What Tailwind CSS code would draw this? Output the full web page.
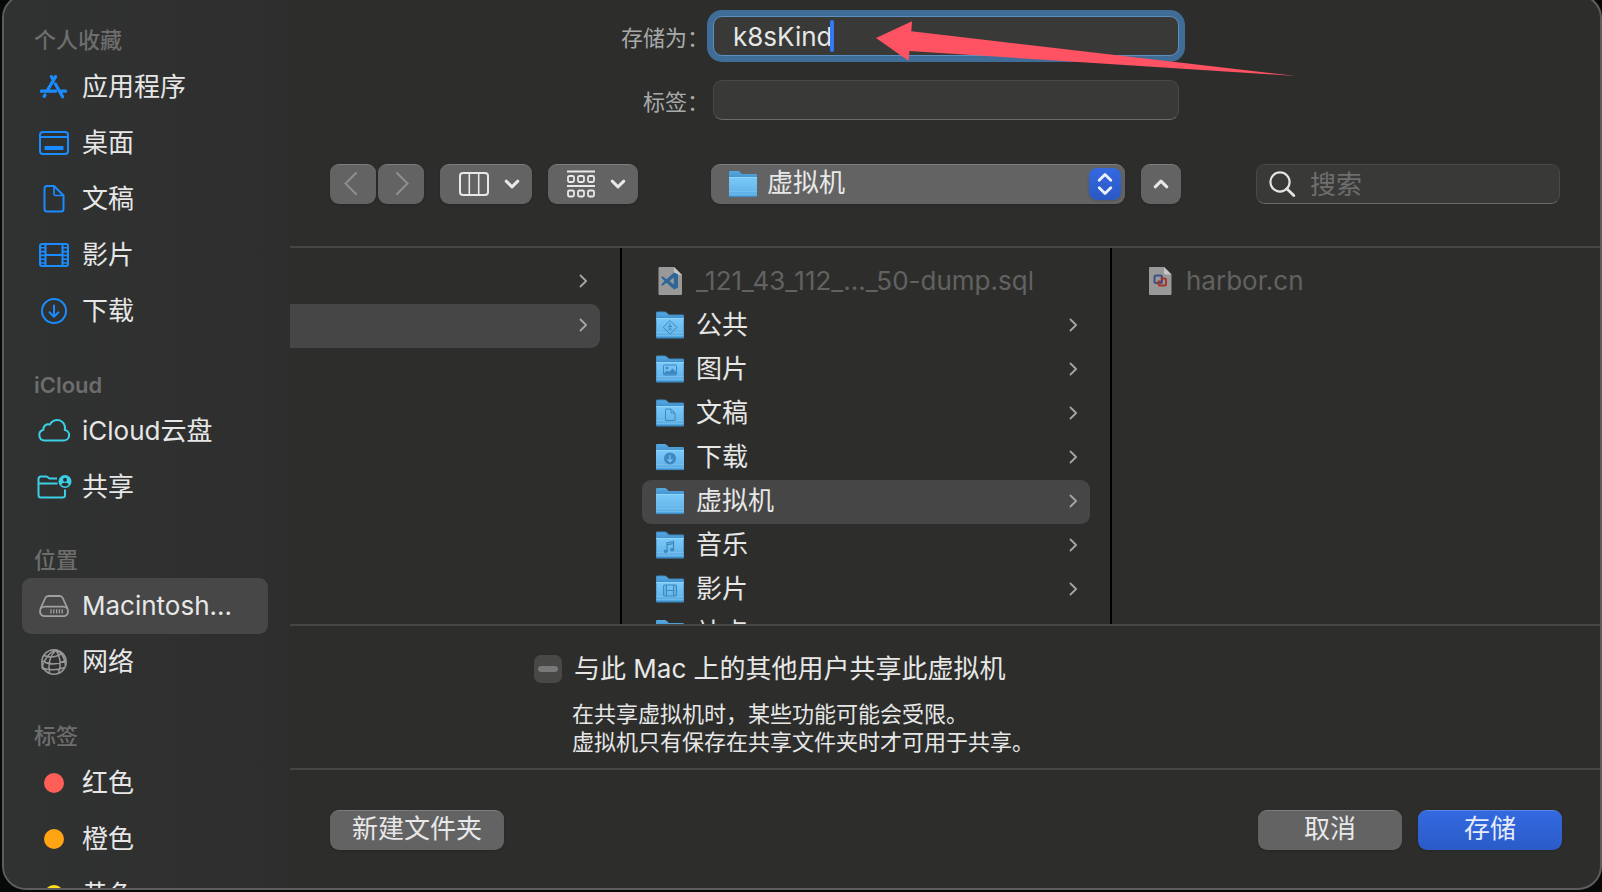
<!DOCTYPE html>
<html lang="zh-CN">
<head>
<meta charset="utf-8">
<meta name="viewport" content="width=device-width, initial-scale=1">
<title>存储</title>
<script src="https://cdn.jsdelivr.net/npm/@tailwindcss/browser@4"></script>
</head>
<body class="h-screen overflow-hidden bg-[#070808] pl-[2px] font-['Inter','Noto_Sans_CJK_SC',sans-serif] text-[26px] leading-9 text-[#e6e7e6]">

<!-- Shared symbols -->
<svg class="absolute h-0 w-0" aria-hidden="true">
  <defs>
    <linearGradient id="folderBack" x1="0" y1="0" x2="0" y2="1"><stop offset="0" stop-color="#56a9e0"/><stop offset="1" stop-color="#3a86c6"/></linearGradient>
    <linearGradient id="folderFront" x1="0" y1="0" x2="0" y2="1"><stop offset="0" stop-color="#7bcaf8"/><stop offset=".75" stop-color="#64b5ea"/><stop offset="1" stop-color="#4c9fd9"/></linearGradient>
    <symbol id="folder" viewBox="0 0 28 28">
      <path d="M0 2.2Q0 1 1.2 1H8.5Q9.8 1 10.8 2L12.2 3.4Q12.8 4 14 4H26.8Q28 4 28 5.2V12H0Z" fill="url(#folderBack)"/>
      <path d="M0 7H28V26Q28 27 27 27H1Q0 27 0 26Z" fill="url(#folderFront)"/>
      <path d="M0 7.5H28" stroke="#8ed5fb"/>
      <path d="M0 21.5H28M0 24.5H28" stroke="#86c9f3" stroke-width=".6" opacity=".8"/>
      <path d="M0 26.6H28" stroke="#3b87bf" stroke-width=".8"/>
    </symbol>
    <symbol id="chevron" viewBox="0 0 10 14"><path d="M2.500 1.500 8.100 7 2.500 12.500" fill="none" stroke="#a4a5a4" stroke-width="1.8" stroke-linecap="round" stroke-linejoin="round"/></symbol>
    <symbol id="down" viewBox="0 0 16 10"><path d="M2.2 2.2 8 7.8 13.8 2.2" fill="none" stroke="#e8e8e8" stroke-width="3" stroke-linecap="round" stroke-linejoin="round"/></symbol>
  </defs>
</svg>

<div class="-mt-1.5 flex h-[calc(100vh+4px)] overflow-hidden rounded-[24px] border-2 border-[#5c5d5c] bg-[#2d2e2c]">

  <!-- Sidebar -->
  <nav class="w-[286px] shrink-0 overflow-hidden bg-linear-to-r from-[#303231] to-[#2e2e2e] pl-[18px] pr-[22px]" aria-label="边栏">
    <h2 class="flex h-[63px] items-end pb-px pl-3 text-[22px] font-medium text-[#6c6d6c]">个人收藏</h2>
    <ul>
      <li><a href="#" class="flex h-14 items-center gap-[11px] rounded-[9px] px-[15px]">
        <svg class="h-8 w-[34px]" viewBox="0 0 34 32" fill="none" stroke="#1a8cff" stroke-width="3.2" stroke-linecap="round"><path d="M18.6 5.6 10.6 19M14.4 5.6 15.6 7.6M18.4 13 25.6 25.8M7.2 25.4 8 24M4.4 20.2H18.6M24.4 20.2H28.6"/></svg>
        <span>应用程序</span></a></li>
      <li><a href="#" class="flex h-14 items-center gap-[11px] rounded-[9px] px-[15px]">
        <svg class="h-8 w-[34px]" viewBox="0 0 34 32" fill="none" stroke="#1a8cff" stroke-width="2"><rect x="3" y="5" width="28" height="22" rx="3"/><path d="M3 10H31"/><rect x="7.5" y="19" width="19" height="4" rx=".8" fill="#1a8cff" stroke="none"/></svg>
        <span>桌面</span></a></li>
      <li><a href="#" class="flex h-14 items-center gap-[11px] rounded-[9px] px-[15px]">
        <svg class="h-8 w-[34px]" viewBox="0 0 34 32" fill="none" stroke="#1a8cff" stroke-width="2" stroke-linejoin="round"><path d="M10 3H17L26.5 12.5V26Q26.5 28.5 24 28.5H10Q7.500 28.500 7.500 26V5.500Q7.500 3 10 3Z"/><path d="M17 3V11Q17 12.500 18.500 12.500H26.500" stroke-width="1.700"/></svg>
        <span>文稿</span></a></li>
      <li><a href="#" class="flex h-14 items-center gap-[11px] rounded-[9px] px-[15px]">
        <svg class="h-8 w-[34px]" viewBox="0 0 34 32" fill="none" stroke="#1a8cff" stroke-width="2"><rect x="3" y="5" width="28" height="22" rx="2"/><path d="M8.500 5V27M25.500 5V27M8.500 16H25.500"/><path d="M3 8.800H8M3 12.600H8M3 16.400H8M3 20.200H8M3 24H8M26 8.800H31M26 12.600H31M26 16.400H31M26 20.200H31M26 24H31" stroke-width="1.600"/></svg>
        <span>影片</span></a></li>
      <li><a href="#" class="flex h-14 items-center gap-[11px] rounded-[9px] px-[15px]">
        <svg class="h-8 w-[34px]" viewBox="0 0 34 32" fill="none" stroke="#1a8cff" stroke-width="2" stroke-linecap="round" stroke-linejoin="round"><circle cx="17" cy="16" r="12"/><path d="M17 10.500V21.500M12.500 17.300 17 21.800 21.500 17.300"/></svg>
        <span>下载</span></a></li>
    </ul>
    <h2 class="flex h-16 items-end pl-3 text-[22px] font-semibold text-[#6c6d6c]">iCloud</h2>
    <ul>
      <li><a href="#" class="flex h-14 items-center gap-[11px] rounded-[9px] px-[15px]">
        <svg class="h-8 w-[34px]" viewBox="0 0 34 32" fill="none" stroke="#3bd0e6" stroke-width="2" stroke-linejoin="round"><path d="M7.500 25.500H26.500A5.300 5.300 0 0 0 27.800 15A8 8 0 0 0 12.800 9.600A4.800 4.800 0 0 0 6.400 14.700A5.500 5.500 0 0 0 7.500 25.500Z"/></svg>
        <span>iCloud云盘</span></a></li>
      <li><a href="#" class="flex h-14 items-center gap-[11px] rounded-[9px] px-[15px]">
        <svg class="h-8 w-[34px] overflow-visible" viewBox="0 0 34 32" fill="none" stroke="#3bd0e6" stroke-width="2" stroke-linejoin="round"><path d="M20 7.500H12.500L10.500 6Q9.800 5.400 8.800 5.400H4Q1.500 5.400 1.500 8V24Q1.500 26.500 4 26.500H25.500Q28 26.500 28 24V18.500M1.500 12.500H20.500"/><circle cx="28" cy="10.500" r="6.500" fill="#3bd0e6" stroke="none"/><circle cx="28" cy="8.700" r="2" fill="#2e2f2f" stroke="none"/><path d="M24.300 14Q24.800 11.700 28 11.700T31.700 14Q30 15.400 28 15.400T24.300 14Z" fill="#2e2f2f" stroke="none"/></svg>
        <span>共享</span></a></li>
    </ul>
    <h2 class="flex h-[63px] items-end pl-3 text-[22px] font-medium text-[#6c6d6c]">位置</h2>
    <ul>
      <li><a href="#" aria-current="page" class="flex h-14 items-center gap-[11px] rounded-[9px] bg-[#474747] px-[15px]">
        <svg class="h-8 w-[34px]" viewBox="0 0 34 32" fill="none" stroke="#a0a0a0" stroke-width="1.800" stroke-linejoin="round"><path d="M3.500 18.500 8.300 8Q9.200 6 11.400 6H22.600Q24.800 6 25.700 8L30.500 18.500"/><rect x="3" y="16.600" width="28" height="9.600" rx="4.600"/><path d="M14 19.200V23.600M16.800 19.200V23.600M19.600 19.200V23.600M22.400 19.200V23.600M25.200 19.200V23.600" stroke-width="1.300"/></svg>
        <span>Macintosh...</span></a></li>
      <li><a href="#" class="flex h-14 items-center gap-[11px] rounded-[9px] px-[15px]">
        <svg class="h-8 w-[34px]" viewBox="0 0 34 32" fill="none" stroke="#979897" stroke-width="1.500"><circle cx="17" cy="16" r="12.200"/><path d="M19 4Q10 12 12.500 27.500M19 4Q13.500 5 8 14T7.500 23.500M19 4Q26 15 21.500 27M19 4Q28 8 28.500 20M7 9.500Q16 13.500 25.500 7.200M4.800 15Q16 21 29 14.500M7 22.500Q17 25.500 27.500 21.500"/></svg>
        <span>网络</span></a></li>
    </ul>
    <h2 class="flex h-[65px] items-end pb-px pl-3 text-[22px] font-medium text-[#6c6d6c]">标签</h2>
    <ul>
      <li><a href="#" class="flex h-14 items-center gap-[11px] rounded-[9px] px-[15px]"><span class="flex w-[34px] justify-center"><i class="size-5 rounded-full bg-[#ff5f57]"></i></span><span>红色</span></a></li>
      <li><a href="#" class="flex h-14 items-center gap-[11px] rounded-[9px] px-[15px]"><span class="flex w-[34px] justify-center"><i class="size-5 rounded-full bg-[#ffa514]"></i></span><span>橙色</span></a></li>
      <li><a href="#" class="flex h-14 items-center gap-[11px] rounded-[9px] px-[15px]"><span class="flex w-[34px] justify-center"><i class="size-5 rounded-full bg-[#ffe019]"></i></span><span>黄色</span></a></li>
    </ul>
  </nav>

  <main class="flex min-w-0 flex-1 flex-col">

    <!-- Name and tag fields, toolbar -->
    <header class="border-b-2 border-[#454644] pt-5 pb-[42px]">
      <div class="grid grid-cols-[1fr_466px_1fr] items-center gap-x-1 gap-y-6 pl-[2px]">
        <label for="name" class="justify-self-end pt-[3px] text-[22px] text-[#a8a9a8]">存储为：</label>
        <div class="relative">
          <input id="name" type="text" value="k8sKind" class="block h-10 w-full rounded-[9px] border border-[#5d8fc0] bg-[#393a38] px-[19px] text-[#e6e7e6] caret-transparent ring-[6px] ring-[#3f6d97] outline-none">
          <span class="absolute top-1 left-[117px] h-8 w-1 rounded-sm bg-[#3478f6]"></span>
          <!-- Pointer arrow laid over the field -->
          <svg class="pointer-events-none absolute top-0 left-[163px] h-[66px] w-[424px] overflow-visible" viewBox="0 0 424 66" aria-hidden="true"><path d="M0 22 36 5.300 35.300 15.300 420 60 33.500 35 32.500 44.700Z" fill="#ff5263"/></svg>
        </div>
        <label for="tags" class="col-start-1 justify-self-end pt-[3px] text-[22px] text-[#a8a9a8]">标签：</label>
        <input id="tags" type="text" class="block h-10 w-full rounded-[9px] border border-[#484948] border-b-[#6a6b6a] bg-[#393a38] px-5 outline-none">
      </div>

      <div class="mt-11 flex items-center justify-between px-10">
        <div class="flex gap-4">
          <div class="flex gap-[2px]">
            <button type="button" disabled aria-label="后退" class="flex h-10 w-[46px] items-center justify-center rounded-[9px] border-t border-[#7c7d7c] bg-[#636363] pr-1 pb-1 shadow-sm"><svg class="h-6 w-4" viewBox="0 0 16 24" fill="none" stroke="#8d8e8d" stroke-width="2" stroke-linecap="round"><path d="M13 2 2.500 12.500 13 23" /></svg></button>
            <button type="button" disabled aria-label="前进" class="flex h-10 w-[46px] items-center justify-center rounded-[9px] border-t border-[#7c7d7c] bg-[#636363] pb-1 shadow-sm"><svg class="h-6 w-4" viewBox="0 0 16 24" fill="none" stroke="#8d8e8d" stroke-width="2" stroke-linecap="round"><path d="M4 2 14.500 12.500 4 23"/></svg></button>
          </div>
          <button type="button" aria-label="分栏显示" aria-haspopup="menu" class="flex h-10 w-[92px] items-center justify-between rounded-[9px] border-t border-[#7c7d7c] bg-[#636363] pr-3 pb-[2px] pl-[18px] shadow-sm">
            <svg class="h-6 w-8" viewBox="0 0 32 24" fill="none" stroke="#e8e8e8" stroke-width="2"><rect x="2" y="1" width="28" height="22" rx="3"/><path d="M11.300 1V23M20.700 1V23" stroke-width="1.600"/></svg>
            <svg class="h-[10px] w-4"><use href="#down"/></svg>
          </button>
          <button type="button" aria-label="分组方式" aria-haspopup="menu" class="flex h-10 w-[90px] items-center justify-between rounded-[9px] border-t border-[#7c7d7c] bg-[#636363] pr-3 pb-[2px] pl-[18px] shadow-sm">
            <svg class="h-7 w-[30px]" viewBox="0 0 30 28" fill="none" stroke="#e8e8e8" stroke-width="1.800"><path d="M1 1.500H29M1 16H29"/><rect x="2" y="6" width="6" height="6" rx="1.400"/><rect x="12" y="6" width="6" height="6" rx="1.400"/><rect x="22" y="6" width="6" height="6" rx="1.400"/><rect x="2" y="20.500" width="6" height="6" rx="1.400"/><rect x="12" y="20.500" width="6" height="6" rx="1.400"/><rect x="22" y="20.500" width="6" height="6" rx="1.400"/></svg>
            <svg class="h-[10px] w-4"><use href="#down"/></svg>
          </button>
        </div>

        <div class="flex gap-4 pr-[2px]">
          <div class="relative w-[414px]">
            <select aria-label="位置" class="block h-10 w-full appearance-none rounded-[9px] border-t border-[#7c7d7c] bg-[#636363] pr-10 pb-1 pl-14 text-[26px] leading-9 text-[#e8e8e8] shadow-sm outline-none"><option>虚拟机</option></select>
            <svg class="pointer-events-none absolute top-1.5 left-[18px] size-7"><use href="#folder"/></svg>
            <span class="pointer-events-none absolute top-1 right-1 flex size-8 items-center justify-center rounded-[8px] bg-linear-to-b from-[#3569e0] to-[#2a59c4] shadow"><svg class="h-6 w-4" viewBox="0 0 16 24" fill="none" stroke="#edf1fb" stroke-width="2.800" stroke-linecap="round" stroke-linejoin="round"><path d="M2.200 8.200 8 2.600 13.800 8.200M2.200 15.800 8 21.400 13.800 15.800"/></svg></span>
          </div>
          <button type="button" aria-label="折叠" class="flex size-10 items-center justify-center rounded-[9px] border-t border-[#7c7d7c] bg-[#636363] pb-[2px] shadow-sm"><svg class="h-[10px] w-4 rotate-180"><use href="#down"/></svg></button>
        </div>

        <div class="relative w-[304px]">
          <input type="search" aria-label="搜索" placeholder="搜索" class="block h-10 w-full rounded-[9px] border border-[#484948] border-b-[#6a6b6a] bg-[#393a38] pr-3 pl-[53px] text-[#e2e3e2] outline-none placeholder:text-[#6d6e6d]">
          <svg class="pointer-events-none absolute top-1.5 left-3 size-7" viewBox="0 0 28 28" fill="none" stroke="#e2e3e2" stroke-width="2.200" stroke-linecap="round"><circle cx="12" cy="12" r="9.600"/><path d="M18.800 18.800 25.800 25.600" stroke-width="2.800"/></svg>
        </div>
      </div>
    </header>

    <!-- Column browser -->
    <section class="flex min-h-0 flex-1 overflow-hidden" aria-label="文件">
      <ul class="w-[332px] shrink-0 border-r-2 border-black pt-3 pr-5">
        <li><button type="button" aria-label="文件夹" class="flex h-11 w-full items-center justify-end pr-3 pb-[2px]"><svg class="h-3.5 w-[10px]"><use href="#chevron"/></svg></button></li>
        <li><button type="button" aria-label="已选文件夹" class="flex h-11 w-full items-center justify-end rounded-r-[9px] bg-[#464646] pr-3 pb-[2px]"><svg class="h-3.5 w-[10px]"><use href="#chevron"/></svg></button></li>
      </ul>
      <ul class="w-[490px] shrink-0 border-r-2 border-black px-5 pt-3">
        <li><button type="button" disabled class="flex h-11 w-full items-center gap-3 px-3.5 pb-[2px] text-left text-[#616261]">
          <svg class="size-7 shrink-0" viewBox="0 0 28 28"><path d="M2.500 1Q2.500 0 3.500 0H18L26 8V27Q26 28 25 28H3.500Q2.500 28 2.500 27Z" fill="#989998"/><path d="M18 0 26 8H19.500Q18 8 18 6.500Z" fill="#c4c5c4"/><path d="M18 5.500 22 7.200V20.800L18 22.500 10.500 15.800 6.600 18.800 5 17.800 8.500 14 5 10.200 6.600 9.200 10.500 12.200ZM17.800 10.500 13.500 14 17.800 17.500Z" fill="#2f6698" fill-rule="evenodd"/></svg>
          <span>_121_43_112_..._50-dump.sql</span></button></li>
        <li><button type="button" class="flex h-11 w-full items-center gap-3 pr-3 pb-[2px] pl-3.5 text-left">
          <svg class="size-7 shrink-0" viewBox="0 0 28 28" fill="none" stroke="#3f87c0"><use href="#folder" width="28" height="28"/><path d="M14 9.500 20.800 16.300 14 23.100 7.200 16.300Z"/><circle cx="14" cy="12.800" r=".8" fill="#3f87c0" stroke="none"/><path d="M14 14V17L12.500 19.500M14 17 15.500 19.500M11.800 15.800 14 14.500 16 15.800"/></svg>
          <span class="flex-1">公共</span><svg class="h-3.5 w-[10px]"><use href="#chevron"/></svg></button></li>
        <li><button type="button" class="flex h-11 w-full items-center gap-3 pr-3 pb-[2px] pl-3.5 text-left">
          <svg class="size-7 shrink-0" viewBox="0 0 28 28" fill="none" stroke="#3f87c0"><use href="#folder" width="28" height="28"/><rect x="7.500" y="10" width="13" height="10" rx="1"/><circle cx="11" cy="13" r="1.300" fill="#3f87c0" stroke="none"/><path d="M8 19.500V18L11.500 15.500 13 17 16.500 13.500 20 17V19.500Z" fill="#3f87c0" stroke="none"/></svg>
          <span class="flex-1">图片</span><svg class="h-3.5 w-[10px]"><use href="#chevron"/></svg></button></li>
        <li><button type="button" class="flex h-11 w-full items-center gap-3 pr-3 pb-[2px] pl-3.5 text-left">
          <svg class="size-7 shrink-0" viewBox="0 0 28 28" fill="none" stroke="#3f87c0"><use href="#folder" width="28" height="28"/><path d="M10 10H15L19 14V21.500H10Q9.500 21.500 9.500 21V10.500Q9.500 10 10 10ZM15 10V14H19"/></svg>
          <span class="flex-1">文稿</span><svg class="h-3.5 w-[10px]"><use href="#chevron"/></svg></button></li>
        <li><button type="button" class="flex h-11 w-full items-center gap-3 pr-3 pb-[2px] pl-3.5 text-left">
          <svg class="size-7 shrink-0" viewBox="0 0 28 28" fill="none"><use href="#folder" width="28" height="28"/><circle cx="14" cy="15.500" r="6" fill="#3f87c0"/><path d="M14 12V18.500M11.500 16.200 14 18.700 16.500 16.200" stroke="#76c2f2" stroke-width="1.300"/></svg>
          <span class="flex-1">下载</span><svg class="h-3.5 w-[10px]"><use href="#chevron"/></svg></button></li>
        <li><button type="button" aria-current="true" class="flex h-11 w-full items-center gap-3 rounded-[9px] bg-[#464646] pr-3 pb-[2px] pl-3.5 text-left">
          <svg class="size-7 shrink-0"><use href="#folder"/></svg>
          <span class="flex-1">虚拟机</span><svg class="h-3.5 w-[10px]"><use href="#chevron"/></svg></button></li>
        <li><button type="button" class="flex h-11 w-full items-center gap-3 pr-3 pb-[2px] pl-3.5 text-left">
          <svg class="size-7 shrink-0" viewBox="0 0 28 28" fill="none" stroke="#3f87c0" stroke-width="1.200"><use href="#folder" width="28" height="28"/><path d="M11 20V12L17.500 10.500V18.500M11 13.800 17.500 12.300"/><ellipse cx="9.700" cy="20.200" rx="1.500" ry="1.200" fill="#3f87c0"/><ellipse cx="16.200" cy="18.700" rx="1.500" ry="1.200" fill="#3f87c0"/></svg>
          <span class="flex-1">音乐</span><svg class="h-3.5 w-[10px]"><use href="#chevron"/></svg></button></li>
        <li><button type="button" class="flex h-11 w-full items-center gap-3 pr-3 pb-[2px] pl-3.5 text-left">
          <svg class="size-7 shrink-0" viewBox="0 0 28 28" fill="none" stroke="#3f87c0"><use href="#folder" width="28" height="28"/><rect x="7.500" y="10" width="13" height="11" rx=".5"/><path d="M10.500 10V21M17.500 10V21M10.500 15.500H17.500"/><path d="M9 10.500V21M19 10.500V21" stroke-dasharray="1 1"/></svg>
          <span class="flex-1">影片</span><svg class="h-3.5 w-[10px]"><use href="#chevron"/></svg></button></li>
        <li><button type="button" class="flex h-11 w-full items-center gap-3 pr-3 pb-[2px] pl-3.5 text-left">
          <svg class="size-7 shrink-0"><use href="#folder"/></svg>
          <span class="flex-1">站点</span><svg class="h-3.5 w-[10px]"><use href="#chevron"/></svg></button></li>
      </ul>
      <ul class="min-w-0 flex-1 px-5 pt-3">
        <li><button type="button" disabled class="flex h-11 w-full items-center gap-3 px-3.5 pb-[2px] text-left text-[#616261]">
          <svg class="size-7 shrink-0" viewBox="0 0 28 28"><path d="M3 1Q3 0 4 0H18L25.500 7.500V27Q25.500 28 24.500 28H4Q3 28 3 27Z" fill="#989998"/><path d="M18 0 25.500 7.500H19.500Q18 7.500 18 6Z" fill="#c4c5c4"/><g fill="none" stroke-width="2"><rect x="8.500" y="8.500" width="7.500" height="7.500" rx="1.500" stroke="#3a5187"/><path d="M14.500 11.500H18.500Q20 11.500 20 13V17Q20 18.500 18.500 18.500H14Q12.500 18.500 12.500 17V14.500H15" stroke="#a8342c"/></g></svg>
          <span>harbor.cn</span></button></li>
      </ul>
    </section>

    <!-- Sharing option -->
    <section class="border-y-2 border-[#454644] pt-[25px] pb-3 pl-[244px]">
      <div class="flex items-center gap-3">
        <span class="grid size-7 place-items-center">
          <input id="share" type="checkbox" disabled aria-checked="mixed" aria-describedby="share-note" class="size-7 appearance-none rounded-[7px] bg-[#484947] [grid-area:1/1]">
          <i class="pointer-events-none h-[6px] w-5 rounded-full bg-[#777877] [grid-area:1/1]"></i>
        </span>
        <label for="share">与此 Mac 上的其他用户共享此虚拟机</label>
      </div>
      <p id="share-note" class="mt-[13px] pl-[38px] text-[22px] leading-7">在共享虚拟机时，某些功能可能会受限。<br>虚拟机只有保存在共享文件夹时才可用于共享。</p>
    </section>

    <footer class="flex items-center justify-between pt-10 pr-[38px] pb-[38px] pl-10">
      <button type="button" class="flex h-10 w-[174px] items-center justify-center rounded-[9px] border-t border-[#7c7d7c] bg-[#636363] pb-1 text-[#e8e8e8] shadow-sm">新建文件夹</button>
      <div class="flex gap-4">
        <button type="button" class="flex h-10 w-36 items-center justify-center rounded-[9px] border-t border-[#7c7d7c] bg-[#636363] pb-1 text-[#e8e8e8] shadow-sm">取消</button>
        <button type="submit" class="flex h-10 w-36 items-center justify-center rounded-[9px] border-t border-[#5a86ea] bg-linear-to-b from-[#3369e0] to-[#2b5bc8] pb-1 text-[#e6ecfb] shadow-sm">存储</button>
      </div>
    </footer>
  </main>
</div>
</body>
</html>
